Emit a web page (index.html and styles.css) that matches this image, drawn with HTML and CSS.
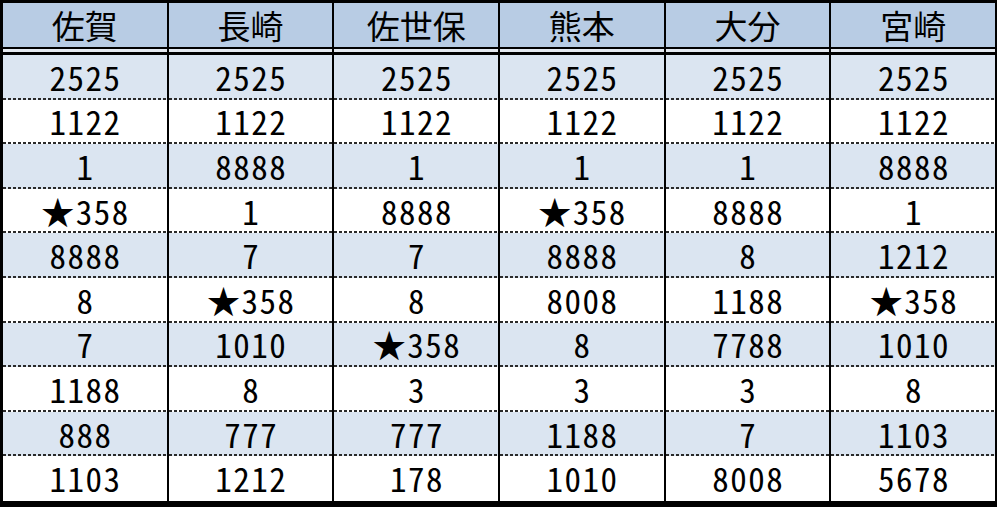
FILE: index.html
```html
<!DOCTYPE html>
<html lang="ja">
<head>
<meta charset="utf-8">
<title>表</title>
<link rel="stylesheet" href="styles.css">
</head>
<body>
<div class="sheet">
  <div class="hd">佐賀</div><div class="hd">長崎</div><div class="hd">佐世保</div><div class="hd">熊本</div><div class="hd">大分</div><div class="hd">宮崎</div>
  <div class="sep"></div><div class="sep"></div><div class="sep"></div><div class="sep"></div><div class="sep"></div><div class="sep"></div>

  <div class="c odd">2525</div><div class="c odd">2525</div><div class="c odd">2525</div><div class="c odd">2525</div><div class="c odd">2525</div><div class="c odd">2525</div>
  <div class="c">1122</div><div class="c">1122</div><div class="c">1122</div><div class="c">1122</div><div class="c">1122</div><div class="c">1122</div>
  <div class="c odd">1</div><div class="c odd">8888</div><div class="c odd">1</div><div class="c odd">1</div><div class="c odd">1</div><div class="c odd">8888</div>
  <div class="c">★358</div><div class="c">1</div><div class="c">8888</div><div class="c">★358</div><div class="c">8888</div><div class="c">1</div>
  <div class="c odd">8888</div><div class="c odd">7</div><div class="c odd">7</div><div class="c odd">8888</div><div class="c odd">8</div><div class="c odd">1212</div>
  <div class="c">8</div><div class="c">★358</div><div class="c">8</div><div class="c">8008</div><div class="c">1188</div><div class="c">★358</div>
  <div class="c odd">7</div><div class="c odd">1010</div><div class="c odd">★358</div><div class="c odd">8</div><div class="c odd">7788</div><div class="c odd">1010</div>
  <div class="c">1188</div><div class="c">8</div><div class="c">3</div><div class="c">3</div><div class="c">3</div><div class="c">8</div>
  <div class="c odd">888</div><div class="c odd">777</div><div class="c odd">777</div><div class="c odd">1188</div><div class="c odd">7</div><div class="c odd">1103</div>
  <div class="c last">1103</div><div class="c last">1212</div><div class="c last">178</div><div class="c last">1010</div><div class="c last">8008</div><div class="c last">5678</div>
</div>
</body>
</html>
```
FILE: styles.css
```css
html, body {
  margin: 0;
  padding: 0;
  background: #ffffff;
}

.sheet {
  width: 992px;
  height: 498px;
  display: grid;
  grid-template-columns: repeat(6, 1fr);
  grid-template-rows: 44px 8px repeat(10, 1fr);
  column-gap: 2px;
  background: #000;
  border-style: solid;
  border-color: #000;
  border-width: 3px 2px 6px 3px;
  font-family: "Noto Sans CJK JP", "Noto Sans", sans-serif;
  font-feature-settings: "hwid" 1;
  color: #000;
}

.hd {
  background: #b8cce4;
  font-size: 33px;
  line-height: 1;
  display: flex;
  align-items: center;
  justify-content: center;
  padding-top: 1px;
}

.sep {
  background: linear-gradient(#000 0 2px, #e4e9f0 2px 5px, #000 5px 8px);
}

.c {
  font-size: 33px;
  line-height: 1;
  letter-spacing: 1.5px;
  padding-left: 1.5px;
  display: flex;
  align-items: center;
  justify-content: center;
  background-color: #ffffff;
  background-image: repeating-linear-gradient(to right, #2a2a2a 0 3px, transparent 3px 5px);
  background-size: 100% 2px;
  background-position: left bottom;
  background-repeat: no-repeat;
}

.c.odd {
  background-color: #dbe5f1;
}

.c.last {
  background-image: none;
}
```
